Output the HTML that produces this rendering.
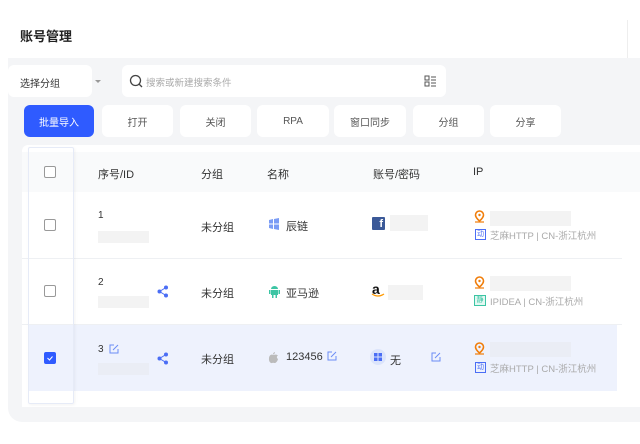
<!DOCTYPE html><html><head><meta charset="utf-8"><style>
*{margin:0;padding:0;box-sizing:border-box}
body{width:640px;height:444px;background:#fff;font-family:"Liberation Sans","Noto Sans CJK SC",sans-serif;position:relative;overflow:hidden;color:#333}
.a{position:absolute}
.t{font-size:11px;color:#333;white-space:nowrap}
.btn{position:absolute;top:105px;height:32px;background:#fff;border-radius:6px;font-size:10px;color:#555;display:flex;align-items:center;justify-content:center}
.cb{position:absolute;left:44px;width:12px;height:12px;border:1px solid #999;border-radius:2px;background:#fff}
.ph{position:absolute;background:#f3f3f3}
.sub{font-size:9.5px;color:#aaa;white-space:nowrap}
</style></head><body>
<div class="a" style="left:20px;top:26px;font-size:13px;font-weight:bold;color:#222">账号管理</div>
<div class="a" style="left:8px;top:20px;width:620px;height:40px;border-right:1px solid #eee"></div>
<div class="a" style="left:8px;top:58px;width:640px;height:364px;background:#f4f5f7;border-bottom-left-radius:14px"></div>
<div class="a" style="left:8px;top:65px;width:84px;height:32px;background:#fff;border-radius:6px"></div>
<div class="a t" style="left:20px;top:75px;font-size:10px">选择分组</div>
<div class="a" style="left:95px;top:80px;border:3px solid transparent;border-top:3px solid #999"></div>
<div class="a" style="left:122px;top:65px;width:324px;height:32px;background:#fff;border-radius:6px"></div>
<svg class="a" style="left:129px;top:74px" width="14" height="14"><circle cx="6.5" cy="6.5" r="5" fill="none" stroke="#444" stroke-width="1.3"/><path d="M10 10l3 3" stroke="#444" stroke-width="1.3"/></svg>
<div class="a" style="left:146px;top:75px;font-size:9.5px;color:#aaa">搜索或新建搜索条件</div>
<svg class="a" style="left:424px;top:75px" width="12" height="12"><rect x="1" y="1" width="4" height="4" fill="none" stroke="#555"/><rect x="1" y="7" width="4" height="4" fill="none" stroke="#555"/><path d="M7 2h5M7 5h5M7 8h5M7 11h5" stroke="#555"/></svg>
<div class="btn" style="left:24px;width:70px;background:#2f5bff;color:#fff">批量导入</div>
<div class="btn" style="left:102px;width:71px">打开</div>
<div class="btn" style="left:180px;width:71px">关闭</div>
<div class="btn" style="left:257px;width:72px">RPA</div>
<div class="btn" style="left:334px;width:72px">窗口同步</div>
<div class="btn" style="left:413px;width:71px">分组</div>
<div class="btn" style="left:490px;width:71px">分享</div>
<div class="a" style="left:22px;top:145px;width:620px;height:262px;background:#fff;border-top-left-radius:6px"></div>
<div class="a" style="left:22px;top:152px;width:620px;height:40px;background:#f9fafb"></div>
<div class="a" style="left:22px;top:258px;width:600px;height:1px;background:#eef0f3"></div>
<div class="a" style="left:22px;top:324px;width:600px;height:1px;background:#eef0f3"></div>
<div class="a" style="left:28px;top:325px;width:589px;height:66px;background:#eef2fd"></div>
<div class="a" style="left:28px;top:147px;width:46px;height:257px;border:1px solid #e6ebf7;box-shadow:1px 1px 3px rgba(0,0,0,.05);border-radius:2px"></div>
<div class="cb" style="top:166px"></div>
<div class="cb" style="top:219px"></div>
<div class="cb" style="top:285px"></div>
<div class="cb" style="top:352px;background:#2f5bff;border-color:#2f5bff"><svg width="10" height="10" style="position:absolute;left:0;top:0"><path d="M2.5 5l2 2 3-3.5" stroke="#fff" fill="none" stroke-width="1"/></svg></div>
<div class="a t" style="left:98px;top:166px">序号/ID</div>
<div class="a t" style="left:201px;top:166px">分组</div>
<div class="a t" style="left:267px;top:166px">名称</div>
<div class="a t" style="left:373px;top:166px">账号/密码</div>
<div class="a t" style="left:473px;top:166px">IP</div>
<!-- row1 -->
<div class="a t" style="left:98px;top:210px;font-size:10px">1</div>
<div class="ph" style="left:98px;top:231px;width:51px;height:12px"></div>
<div class="a t" style="left:201px;top:219px">未分组</div>
<svg class="a" style="left:268px;top:218px" width="12" height="12"><path d="M1 2l4-1v4.5H1zM6 1l5-1v5.5H6zM1 6.5h4V11l-4-1zM6 6.5h5V12l-5-1z" fill="#7b9cf5"/></svg>
<div class="a t" style="left:286px;top:218px">辰链</div>
<div class="a" style="left:372px;top:217px;width:13px;height:13px;background:#3b5998;border-radius:1px;color:#fff;font-size:11px;font-weight:bold;text-align:right;padding-right:2px;line-height:15px">f</div>
<div class="ph" style="left:390px;top:215px;width:38px;height:16px"></div>
<svg class="a" style="left:474px;top:210px" width="11" height="13"><path d="M5.5 1a4 4 0 014 4c0 2.5-4 6-4 6s-4-3.5-4-6a4 4 0 014-4z" fill="none" stroke="#f07d0a" stroke-width="1.6"/><circle cx="5.5" cy="5" r="1.2" fill="#f07d0a"/><path d="M1 12h9" stroke="#f07d0a" stroke-width="1.2"/></svg>
<div class="ph" style="left:490px;top:211px;width:81px;height:15px"></div>
<div class="a" style="left:475px;top:229px;width:11px;height:11px;border:1px solid #4b6ef5;font-size:7px;color:#4b6ef5;line-height:9px;text-align:center">动</div>
<div class="a sub" style="left:490px;top:228px">芝麻HTTP | CN-浙江杭州</div>
<!-- row2 -->
<div class="a t" style="left:98px;top:277px;font-size:10px">2</div>
<div class="ph" style="left:98px;top:296px;width:51px;height:12px"></div>
<svg class="a" style="left:157px;top:285px" width="12" height="13"><circle cx="9" cy="2.5" r="2" fill="#4b6ef5"/><circle cx="2.5" cy="6.5" r="2" fill="#4b6ef5"/><circle cx="9" cy="10.5" r="2" fill="#4b6ef5"/><path d="M9 2.5L2.5 6.5 9 10.5" stroke="#4b6ef5" fill="none"/></svg>
<div class="a t" style="left:201px;top:285px">未分组</div>
<svg class="a" style="left:269px;top:285px" width="11" height="13"><path d="M2 4a3.5 3 0 017 0z" fill="#3cc5a4"/><rect x="2" y="5" width="7" height="5" fill="#3cc5a4"/><rect x="0" y="5" width="1.5" height="4" fill="#3cc5a4"/><rect x="9.5" y="5" width="1.5" height="4" fill="#3cc5a4"/><rect x="3" y="10" width="1.5" height="3" fill="#3cc5a4"/><rect x="6.5" y="10" width="1.5" height="3" fill="#3cc5a4"/></svg>
<div class="a t" style="left:286px;top:285px">亚马逊</div>
<div class="a" style="left:372px;top:281px;font-size:14px;font-weight:bold;color:#111">a</div>
<svg class="a" style="left:371px;top:293px" width="14" height="5"><path d="M1 1q6 4 12 0" stroke="#f90" fill="none" stroke-width="1.3"/></svg>
<div class="ph" style="left:388px;top:285px;width:35px;height:15px"></div>
<svg class="a" style="left:474px;top:276px" width="11" height="13"><path d="M5.5 1a4 4 0 014 4c0 2.5-4 6-4 6s-4-3.5-4-6a4 4 0 014-4z" fill="none" stroke="#f07d0a" stroke-width="1.6"/><circle cx="5.5" cy="5" r="1.2" fill="#f07d0a"/><path d="M1 12h9" stroke="#f07d0a" stroke-width="1.2"/></svg>
<div class="ph" style="left:490px;top:276px;width:81px;height:15px"></div>
<div class="a" style="left:474px;top:295px;width:12px;height:11px;border:1px solid #3cc5a4;background:#e3f8f2;font-size:7px;color:#3cc5a4;line-height:9px;text-align:center">静</div>
<div class="a sub" style="left:490px;top:294px">IPIDEA | CN-浙江杭州</div>
<!-- row3 -->
<div class="a t" style="left:98px;top:344px;font-size:10px">3</div>
<svg class="a" style="left:109px;top:344px" width="10" height="10"><path d="M5 1H1v8h8V5" fill="none" stroke="#6b8cf5"/><path d="M4 6l5-5" stroke="#6b8cf5"/></svg>
<div class="ph" style="left:98px;top:363px;width:51px;height:12px;background:#eaedf5"></div>
<svg class="a" style="left:157px;top:352px" width="12" height="13"><circle cx="9" cy="2.5" r="2" fill="#4b6ef5"/><circle cx="2.5" cy="6.5" r="2" fill="#4b6ef5"/><circle cx="9" cy="10.5" r="2" fill="#4b6ef5"/><path d="M9 2.5L2.5 6.5 9 10.5" stroke="#4b6ef5" fill="none"/></svg>
<div class="a t" style="left:201px;top:351px">未分组</div>
<svg class="a" style="left:268px;top:351px" width="11" height="13"><path d="M7 1q0 2-2 2.5Q5 1.5 7 1z" fill="#bbb"/><path d="M5.5 4c-1-.5-4-1-4.5 3s2 5.5 3 5 1.5-.3 2.5 0 3-1.5 3.5-4c-1.5-.8-1.5-3 0-3.5-1.3-1.5-3.5-.8-4.5-.5z" fill="#bbb"/></svg>
<div class="a t" style="left:286px;top:351px">123456</div>
<svg class="a" style="left:327px;top:351px" width="10" height="10"><path d="M5 1H1v8h8V5" fill="none" stroke="#6b8cf5"/><path d="M4 6l5-5" stroke="#6b8cf5"/></svg>
<div class="a" style="left:370px;top:349px;width:16px;height:16px;border-radius:50%;background:#dbe4fb"></div>
<svg class="a" style="left:374px;top:353px" width="8" height="8"><rect x="0" y="0" width="3.5" height="3.5" fill="#4b6ef5"/><rect x="4.5" y="0" width="3.5" height="3.5" fill="#4b6ef5"/><rect x="0" y="4.5" width="3.5" height="3.5" fill="#4b6ef5"/><rect x="4.5" y="4.5" width="3.5" height="3.5" fill="#4b6ef5"/></svg>
<div class="a t" style="left:390px;top:352px">无</div>
<svg class="a" style="left:431px;top:352px" width="10" height="10"><path d="M5 1H1v8h8V5" fill="none" stroke="#6b8cf5"/><path d="M4 6l5-5" stroke="#6b8cf5"/></svg>
<svg class="a" style="left:474px;top:342px" width="11" height="13"><path d="M5.5 1a4 4 0 014 4c0 2.5-4 6-4 6s-4-3.5-4-6a4 4 0 014-4z" fill="none" stroke="#f07d0a" stroke-width="1.6"/><circle cx="5.5" cy="5" r="1.2" fill="#f07d0a"/><path d="M1 12h9" stroke="#f07d0a" stroke-width="1.2"/></svg>
<div class="ph" style="left:490px;top:342px;width:81px;height:15px;background:#eaedf5"></div>
<div class="a" style="left:475px;top:362px;width:11px;height:11px;border:1px solid #4b6ef5;font-size:7px;color:#4b6ef5;line-height:9px;text-align:center">动</div>
<div class="a sub" style="left:490px;top:361px">芝麻HTTP | CN-浙江杭州</div>
</body></html>
